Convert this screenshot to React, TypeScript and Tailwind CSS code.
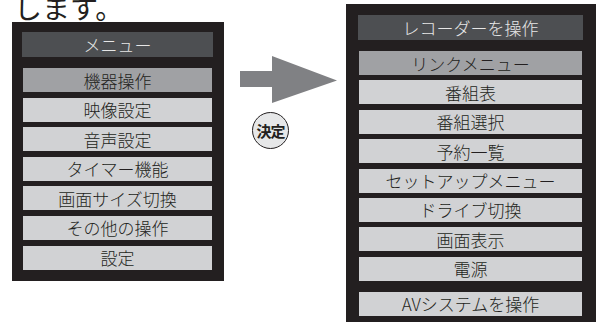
const font = { fontFamily: '"Noto Sans CJK JP", "Noto Sans", sans-serif' }

const leftItems = ['機器操作', '映像設定', '音声設定', 'タイマー機能', '画面サイズ切換', 'その他の操作', '設定']
const rightItems = ['リンクメニュー', '番組表', '番組選択', '予約一覧', 'セットアップメニュー', 'ドライブ切換', '画面表示', '電源']

function Item({ label, selected }: { label: string; selected?: boolean }) {
  return (
    <div
      className={`flex h-[24px] items-center justify-center text-[17px] font-light leading-none text-[#231f20] ${
        selected ? 'bg-[#a0a1a4]' : 'bg-[#d1d2d4]'
      }`}
    >
      {label}
    </div>
  )
}

export default function App() {
  return (
    <div className="h-[322px] w-[601px] overflow-hidden bg-white" style={font}>
      <div className="flex items-start">
        <div className="ml-[12px] w-[212px]">
          <div className="-mt-[7px] h-[29px] pl-[2px] text-[28px] font-normal leading-[28px] text-[#231f20]">します。</div>
          <div className="bg-[#231f20] pb-[11px] pl-[10px] pt-[10px]">
            <div className="flex h-[25px] w-[191px] items-center justify-center bg-[#4d4f52] text-[17px] font-light leading-none text-[#e6e6e6]">
              メニュー
            </div>
            <div className="ml-[1px] mt-[11px] flex w-[189px] flex-col gap-[5.6px]">
              {leftItems.map((label, i) => (
                <Item key={label} label={label} selected={i === 0} />
              ))}
            </div>
          </div>
        </div>

        <div className="w-[122px] pl-[16px] pt-[56px]">
          <svg width="97" height="47" viewBox="0 0 97 47" className="block">
            <polygon points="0,15 32,15 32,0 97,24.5 32,47 32,31 0,31" fill="#808184" />
          </svg>
          <div className="ml-[12px] mt-[9px] flex h-[37px] w-[37px] items-center justify-center rounded-full border-[1.5px] border-[#231f20] bg-[#e6e7e8] text-[15px] font-bold leading-none tracking-[-1px] text-[#231f20]">
            決定
          </div>
        </div>

        <div className="mt-[4px] h-[330px] w-[250px] bg-[#231f20] pl-[12px] pt-[11px]">
          <div className="flex h-[25px] w-[225px] items-center justify-center bg-[#4d4f52] text-[17px] font-light leading-none text-[#e6e6e6]">
            レコーダーを操作
          </div>
          <div className="ml-[1px] mt-[11px] flex w-[223px] flex-col gap-[5.4px]">
            {rightItems.map((label, i) => (
              <Item key={label} label={label} selected={i === 0} />
            ))}
          </div>
          <div className="ml-[1px] mt-[11px] w-[223px]">
            <Item label="AVシステムを操作" />
          </div>
        </div>
      </div>
    </div>
  )
}
